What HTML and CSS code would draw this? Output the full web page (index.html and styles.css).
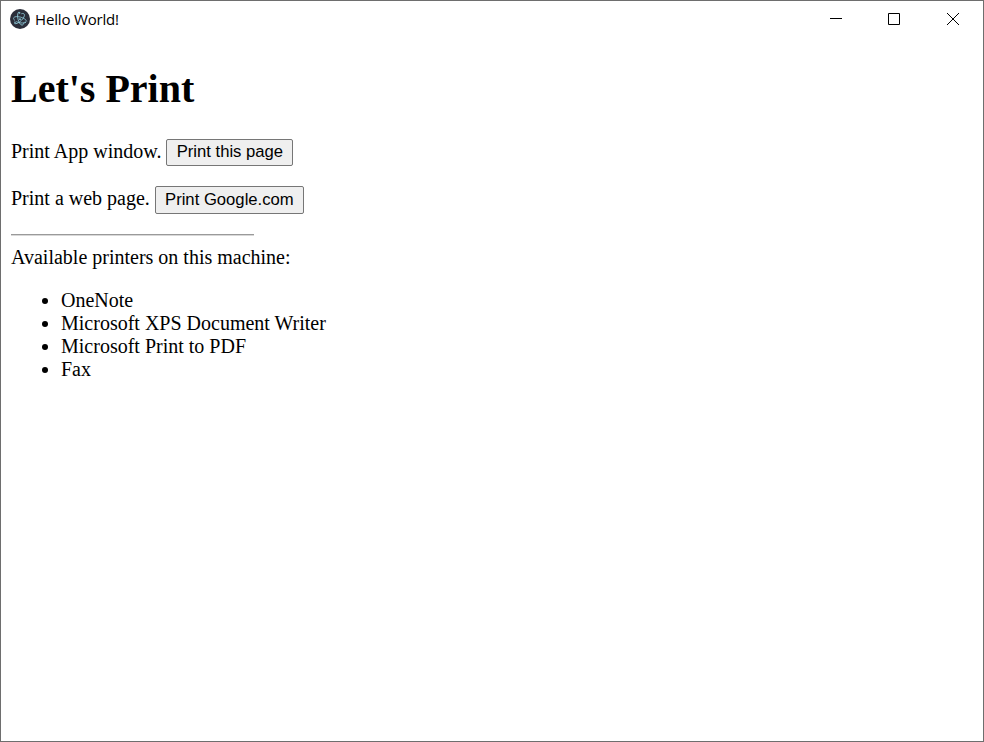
FILE: index.html
```html
<!DOCTYPE html>
<html lang="en">
<head>
<meta charset="utf-8">
<title>Hello World!</title>
<link rel="stylesheet" href="styles.css">
</head>
<body>
<div class="window">
  <header class="titlebar">
    <svg class="app-icon" viewBox="0 0 20 20">
      <circle cx="10" cy="10" r="10" fill="#2b2e3a"/>
      <g fill="none" stroke="#8fc9d8" stroke-width=".8" stroke-linecap="round">
        <path id="orbit" d="M4.500 11.200C3.500 10.400 3.300 9.400 3.800 8.600 4.600 7.400 7.500 7.300 10.500 8.100 13.800 9 16.300 10.700 16.700 12.200"/>
        <use href="#orbit" transform="rotate(120 10 10)"/>
        <use href="#orbit" transform="rotate(240 10 10)"/>
        <path d="M6.500 12.700c2.400 1.200 5.300 1.600 8 1.100"/>
      </g>
      <g fill="#8fc9d8">
        <circle cx="10" cy="10.200" r=".9"/>
        <circle cx="5" cy="13.200" r=".8"/>
        <circle cx="15.300" cy="13.300" r=".8"/>
        <circle cx="9.600" cy="3.900" r=".8"/>
      </g>
    </svg>
    <span class="title">Hello World!</span>
    <div class="controls">
      <svg class="control" viewBox="0 0 58 36"><path d="M21 17.500h12"/></svg>
      <svg class="control" viewBox="0 0 58 36"><path d="M21.500 12.500h11v11h-11z"/></svg>
      <svg class="control" viewBox="0 0 58 36"><path d="M22 12l12 12M34 12l-12 12"/></svg>
    </div>
  </header>
  <main class="content">
    <h1>Let's Print</h1>
    <p class="row"><span>Print App window.</span> <button class="btn this-page">Print this page</button></p>
    <p class="row second"><span>Print a web page.</span> <button class="btn google">Print Google.com</button></p>
    <hr class="rule">
    <div class="label">Available printers on this machine:</div>
    <ul class="printers">
      <li>OneNote</li>
      <li>Microsoft XPS Document Writer</li>
      <li>Microsoft Print to PDF</li>
      <li>Fax</li>
    </ul>
  </main>
</div>
</body>
</html>
```
FILE: styles.css
```css
* { box-sizing: border-box; }
body { margin: 0; background: #fff; color: #000; }
.window { height: 742px; border: 1px solid #6e6e6e; overflow: hidden; }
.titlebar { display: flex; align-items: center; height: 36px; padding-left: 9px; }
.app-icon { width: 20px; height: 20px; }
.title { margin-left: 5px; font: 15px/20px "Open Sans", sans-serif; letter-spacing: -0.17px; }
.controls { display: flex; margin-left: auto; }
.control { width: 58px; height: 36px; fill: none; stroke: #000; stroke-width: 1; }
.content { padding: 29px 10px 0; font: 20px/23px "Liberation Serif", serif; }
h1 { margin: 0; font-size: 40px; line-height: 46px; }
.row { display: flex; align-items: flex-start; gap: 5px; height: 27px; margin: 27px 0 0; }
.row span { padding-top: 1px; }
.row.second { height: 28px; margin-top: 20px; }
.btn { height: 100%; padding: 0 0 2px; border: 1px solid #767676; border-radius: 2px; background: #efefef; color: #000; font: 16.67px/19px "Liberation Sans", sans-serif; }
.this-page { width: 127px; }
.google { width: 149px; padding-bottom: 1px; }
.rule { width: 243px; height: 2px; margin: 20px 0 10px; border: 0; border-top: 1px solid #9a9a9a; border-bottom: 1px solid #d8d8d8; }
.printers { margin: 20px 0 0; padding-left: 50px; }
```
